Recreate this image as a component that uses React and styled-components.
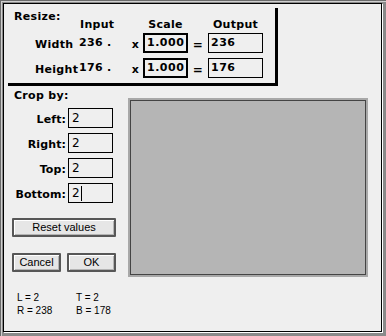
import { Fragment } from "react";
import styled, { createGlobalStyle } from "styled-components";

const Global = createGlobalStyle`
  html, body {
    margin: 0;
    padding: 0;
    background: #8a8a8a;
  }
`;

const chicago = `"DejaVu Sans", "Liberation Sans", sans-serif`;
const geneva = `"Liberation Sans", Arial, sans-serif`;

const Window = styled.div`
  box-sizing: border-box;
  width: 386px;
  height: 336px;
  padding: 3px 4px 4px 3px;
  background: #8a8a8a;
  box-shadow: inset 1px 1px 0 #6a6a6a, inset 2px 2px 0 #cfcfcf;
`;

const Dialog = styled.div`
  box-sizing: border-box;
  width: 100%;
  height: 100%;
  border: 1px solid #000;
  background: #efefef;
  box-shadow: 1px 1px 0 #fff;
  display: flex;
  flex-direction: column;
  font-family: ${chicago};
  font-weight: bold;
  font-size: 11px;
  letter-spacing: 0.3px;
  color: #000;
`;

const ResizeGroup = styled.div`
  box-sizing: border-box;
  width: 270px;
  height: 78px;
  margin: 4px 0 0 4px;
  padding: 2px 0 0 6px;
  border-right: 3px solid #000;
  border-bottom: 3px solid #000;
`;

const Title = styled.div`
  line-height: 14px;
  height: 14px;
`;

const Table = styled.div`
  display: grid;
  grid-template-columns: 44px 49px 15px 45px 20px 55px;
  grid-template-rows: 10px 20px 20px;
  row-gap: 5px;
  margin: -6px 0 0 21px;
`;

const Head = styled.div`
  line-height: 14px;
  height: 14px;
  text-align: ${(p) => p.$align || "left"};
  padding-left: ${(p) => (p.$align ? 0 : 1)}px;
`;

const RowLabel = styled.div`
  line-height: 24px;
  height: 20px;
`;

const Value = styled.div`
  line-height: 20px;
  height: 20px;
  white-space: pre;
`;

const Sign = styled.div`
  line-height: 24px;
  height: 20px;
  text-align: center;
  font-size: ${(p) => p.$size || 11}px;
`;

const Field = styled.div`
  box-sizing: border-box;
  height: 20px;
  border: ${(p) => p.$thick || 1}px solid #000;
  padding-left: 2px;
  line-height: ${(p) => 20 - 2 * (p.$thick || 1)}px;
  font-size: 11px;
  letter-spacing: 0.5px;
  white-space: nowrap;
`;

const Lower = styled.div`
  display: flex;
  flex: 1;
`;

const LeftCol = styled.div`
  width: 124px;
  box-sizing: border-box;
  padding: 3px 0 0 9px;
  display: flex;
  flex-direction: column;
`;

const Section = styled.div`
  line-height: 14px;
  height: 14px;
  margin: 0 0 5px 1px;
`;

const CropRows = styled.div`
  display: flex;
  flex-direction: column;
  gap: 5px;
`;

const CropRow = styled.div`
  display: flex;
  height: 20px;
  gap: 2px;
`;

const CropLabel = styled.div`
  width: 53px;
  text-align: right;
  line-height: 24px;
  height: 20px;
  letter-spacing: 0.1px;
`;

const CropField = styled.div`
  box-sizing: border-box;
  width: 45px;
  height: 20px;
  border: 1px solid #000;
  padding-left: 3px;
  font-family: "DejaVu Sans", sans-serif;
  font-weight: normal;
  font-size: 12px;
  line-height: 18px;
  display: flex;
  align-items: center;
`;

const Caret = styled.span`
  display: inline-block;
  width: 1px;
  height: 15px;
  margin-left: 1px;
  background: #000;
`;

const Button = styled.button`
  box-sizing: border-box;
  width: ${(p) => p.$w}px;
  height: 19px;
  padding: 0;
  border: 2px solid #575757;
  border-radius: 1px;
  background: #e6e6e6;
  box-shadow: inset 1px 1px 0 #ffffff, inset -1px -1px 0 #b4b4b4;
  font-family: ${geneva};
  font-size: 11px;
  color: #000;
  line-height: 15px;
`;

const ResetWrap = styled.div`
  margin-top: 15px;
  margin-left: -1px;
`;

const ButtonRow = styled.div`
  display: flex;
  gap: 6px;
  margin: 16px 0 0 -1px;
`;

const Info = styled.div`
  display: grid;
  grid-template-columns: 59px 50px;
  margin: 19px 0 0 4px;
  font-family: ${geneva};
  font-weight: normal;
  font-size: 10px;
  letter-spacing: 0;
  line-height: 13px;
`;

const Preview = styled.div`
  box-sizing: border-box;
  width: 240px;
  height: 179px;
  margin-top: 12px;
  border: 2px solid #a8a8a8;
  background: #b5b5b5;
  box-shadow: inset 0 0 0 1px #444;
`;

const crops = [
  { label: "Left:", value: "2" },
  { label: "Right:", value: "2" },
  { label: "Top:", value: "2" },
  { label: "Bottom:", value: "2", active: true },
];

const sizes = [
  { label: "Width", input: "236 .", out: "236" },
  { label: "Height", input: "176 .", out: "176" },
];

export default function App() {
  return (
    <>
      <Global />
      <Window>
        <Dialog>
          <ResizeGroup>
            <Title>Resize:</Title>
            <Table>
              <Head />
              <Head>Input</Head>
              <Head />
              <Head $align="center">Scale</Head>
              <Head />
              <Head $align="center">Output</Head>
              {sizes.map((s) => (
                <Fragment key={s.label}>
                  <RowLabel>{s.label}</RowLabel>
                  <Value>{s.input}</Value>
                  <Sign>x</Sign>
                  <Field $thick={2}>1.000</Field>
                  <Sign $size={12}>=</Sign>
                  <Field>{s.out}</Field>
                </Fragment>
              ))}
            </Table>
          </ResizeGroup>
          <Lower>
            <LeftCol>
              <Section>Crop by:</Section>
              <CropRows>
                {crops.map((c) => (
                  <CropRow key={c.label}>
                    <CropLabel>{c.label}</CropLabel>
                    <CropField>
                      {c.value}
                      {c.active && <Caret />}
                    </CropField>
                  </CropRow>
                ))}
              </CropRows>
              <ResetWrap>
                <Button $w={104}>Reset values</Button>
              </ResetWrap>
              <ButtonRow>
                <Button $w={49}>Cancel</Button>
                <Button $w={49}>OK</Button>
              </ButtonRow>
              <Info>
                <span>L = 2</span>
                <span>T = 2</span>
                <span>R = 238</span>
                <span>B = 178</span>
              </Info>
            </LeftCol>
            <Preview />
          </Lower>
        </Dialog>
      </Window>
    </>
  );
}
